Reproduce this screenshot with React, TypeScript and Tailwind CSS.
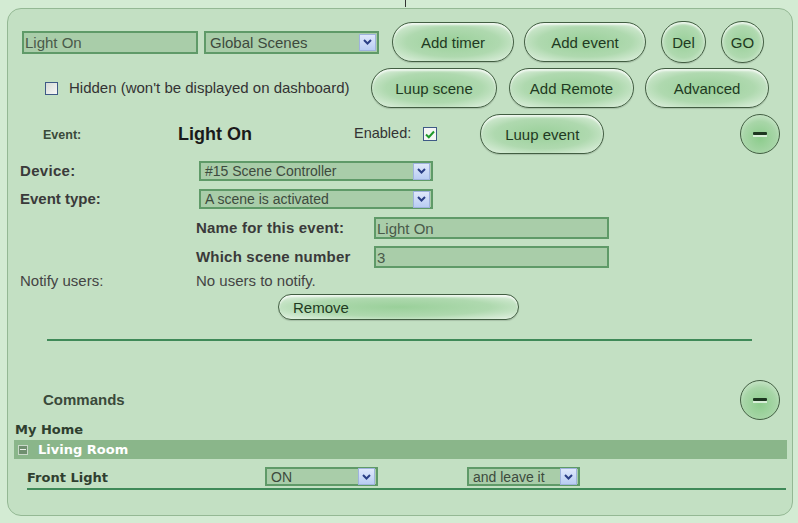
import React from "react";

const font = { fontFamily: '"Liberation Sans", Arial, sans-serif' };

function Arrow() {
  return (
    <div className="w-[17px] h-[17px] flex items-center justify-center bg-gradient-to-b from-[#dfe8fb] to-[#b9cdf3] border border-[#9fb3dd] shrink-0">
      <svg width="9" height="6" viewBox="0 0 9 6">
        <path d="M1 1 L4.5 4.5 L8 1" stroke="#2b3f86" strokeWidth="2" fill="none" />
      </svg>
    </div>
  );
}

function Select({ text, w, h = "h-[20px]", size = "text-[14px]" }: { text: string; w: string; h?: string; size?: string }) {
  return (
    <div className={`${w} ${h} flex items-center justify-between bg-[#a9cda9] border-2 border-[#5f9a68] pl-[4px] pr-[1px] shrink-0`}>
      <span className={`${size} text-[#3d4a3d] leading-none`}>{text}</span>
      <Arrow />
    </div>
  );
}

function Input({ text, w, h = "h-[22px]" }: { text: string; w: string; h?: string }) {
  return (
    <div className={`${w} ${h} flex items-center bg-[#a9cda9] border-2 border-[#5f9a68] pl-[1px] shrink-0`}>
      <span className="text-[15px] text-[#4a5a4a] leading-none">{text}</span>
    </div>
  );
}

function Pill({ text, w, h = "h-[40px]", left = false }: { text: string; w: string; h?: string; left?: boolean }) {
  return (
    <div
      className={`${w} ${h} shrink-0 rounded-full border-[1.5px] border-[#425e42] flex items-center ${left ? "justify-start pl-[14px]" : "justify-center"} bg-[radial-gradient(ellipse_at_center,#9ad09a_0%,#afd9af_55%,#e6f3e6_100%)] shadow-[inset_0_2px_2px_rgba(255,255,255,0.7),0_1px_1px_rgba(0,0,0,0.15)]`}
    >
      <span className="text-[15px] text-[#1f3a22] leading-none">{text}</span>
    </div>
  );
}

function MinusCircle() {
  return (
    <div className="w-[40px] h-[40px] rounded-full border-[1.5px] border-[#425e42] flex items-center justify-center bg-[radial-gradient(circle_at_50%_60%,#8ccc8c_0%,#a8d6a8_55%,#e2f1e2_100%)] shrink-0">
      <div className="flex flex-col items-center">
        <div className="w-[14px] h-[3px] bg-[#1d3620] rounded-[1px]" />
        <div className="w-[14px] h-[2px] bg-[#e8f6e8] opacity-80" />
      </div>
    </div>
  );
}

export default function App() {
  return (
    <div style={font} className="relative w-[798px] h-[523px] bg-[#d3ebd3] overflow-hidden pt-[8px] text-[#333]">
      <div className="absolute left-[405px] top-0 w-[1px] h-[7px] bg-[#333]" />
      <div className="ml-[7px] w-[786px] h-[508px] rounded-[14px] border border-[#94b894] bg-[#c3e0c3] flex flex-col">
        {/* Row 1 */}
        <div className="mt-[13px] h-[40px] flex items-center pl-[14px]">
          <Input text="Light On" w="w-[176px]" h="h-[23px]" />
          <div className="ml-[6px]">
            <Select text="Global Scenes" w="w-[175px]" h="h-[23px]" size="text-[15px]" />
          </div>
          <div className="ml-[13px]"><Pill text="Add timer" w="w-[122px]" /></div>
          <div className="ml-[10px]"><Pill text="Add event" w="w-[122px]" /></div>
          <div className="ml-[15px]"><Pill text="Del" w="w-[45px]" h="h-[42px]" /></div>
          <div className="ml-[15px]"><Pill text="GO" w="w-[43px]" h="h-[42px]" /></div>
        </div>
        {/* Row 2 */}
        <div className="mt-[6px] h-[40px] flex items-center">
          <div className="w-[363px] pl-[37px] flex items-center shrink-0">
            <div className="w-[13px] h-[13px] border border-[#3e5a86] bg-gradient-to-br from-[#d6dcd6] to-[#f7f7f7]" />
            <span className="ml-[11px] text-[15px] text-[#333]">Hidden (won't be displayed on dashboard)</span>
          </div>
          <Pill text="Luup scene" w="w-[126px]" />
          <div className="ml-[12px]"><Pill text="Add Remote" w="w-[125px]" /></div>
          <div className="ml-[11px]"><Pill text="Advanced" w="w-[124px]" /></div>
        </div>
        {/* Row 3 */}
        <div className="mt-[6px] h-[40px] flex items-center pr-[12px]">
          <div className="w-[170px] pl-[35px] shrink-0">
            <span className="text-[12.5px] font-bold text-[#3a4a3a]">Event:</span>
          </div>
          <div className="w-[176px] shrink-0">
            <span className="text-[18px] font-bold text-[#1a1a1a]">Light On</span>
          </div>
          <span className="text-[14.5px] text-[#333]">Enabled:</span>
          <div className="ml-[12px] w-[14px] h-[14px] border border-[#3e5a86] bg-[#f4f6f4] flex items-center justify-center">
            <svg width="10" height="9" viewBox="0 0 10 9">
              <path d="M1 4.5 L3.8 7.2 L9 1.5" stroke="#1f9a2a" strokeWidth="2" fill="none" />
            </svg>
          </div>
          <div className="ml-[43px]"><Pill text="Luup event" w="w-[124px]" /></div>
          <div className="ml-auto"><MinusCircle /></div>
        </div>
        {/* Device */}
        <div className="mt-[7px] h-[20px] flex items-center">
          <div className="w-[191px] pl-[12px] shrink-0">
            <span className="text-[15px] font-bold tracking-[0.3px] text-[#3a3a3a]">Device:</span>
          </div>
          <Select text="#15  Scene Controller" w="w-[234px]" />
        </div>
        {/* Event type */}
        <div className="mt-[8px] h-[20px] flex items-center">
          <div className="w-[191px] pl-[12px] shrink-0">
            <span className="text-[15px] font-bold text-[#3a3a3a]">Event type:</span>
          </div>
          <Select text="A scene is activated" w="w-[234px]" />
        </div>
        {/* Name */}
        <div className="mt-[8px] h-[22px] flex items-center">
          <div className="w-[366px] pl-[188px] shrink-0">
            <span className="text-[15px] font-bold tracking-[0.2px] text-[#3a3a3a]">Name for this event:</span>
          </div>
          <Input text="Light On" w="w-[235px]" />
        </div>
        {/* Scene number */}
        <div className="mt-[7px] h-[22px] flex items-center">
          <div className="w-[366px] pl-[188px] shrink-0">
            <span className="text-[15px] font-bold tracking-[0.2px] text-[#3a3a3a]">Which scene number</span>
          </div>
          <Input text="3" w="w-[235px]" />
        </div>
        {/* Notify */}
        <div className="mt-[5px] h-[16px] flex items-center">
          <div className="w-[188px] pl-[12px] shrink-0">
            <span className="text-[15px] text-[#444]">Notify users:</span>
          </div>
          <span className="text-[15px] text-[#444]">No users to notify.</span>
        </div>
        {/* Remove */}
        <div className="mt-[5px] ml-[270px]">
          <Pill text="Remove" w="w-[241px]" h="h-[26px]" left />
        </div>
        {/* line */}
        <div className="mt-[19px] ml-[39px] w-[705px] h-[2px] bg-[#3f8a58]" />
        {/* Commands */}
        <div className="mt-[39px] h-[40px] flex items-center pl-[35px] pr-[12px]">
          <span className="text-[15px] font-bold text-[#3a4a3a]">Commands</span>
          <div className="ml-auto"><MinusCircle /></div>
        </div>
        <div className="mt-[2px] h-[16px] flex items-center pl-[7px]">
          <span style={{ fontFamily: '"DejaVu Sans", Verdana, sans-serif' }} className="text-[13px] font-bold text-[#2f3f2f]">My Home</span>
        </div>
        <div className="mt-[2px] ml-[6px] w-[773px] h-[19px] bg-[#8ab68a] flex items-center pl-[4px]">
          <div className="w-[10px] h-[10px] bg-[#6f8f6f] border border-[#c9d9c9] flex items-center justify-center">
            <div className="w-[6px] h-[1.5px] bg-[#e8f0e8]" />
          </div>
          <span style={{ fontFamily: '"DejaVu Sans", Verdana, sans-serif' }} className="ml-[10px] text-[13px] font-bold text-white">Living Room</span>
        </div>
        <div className="mt-[8px] h-[19px] flex items-center">
          <div className="w-[257px] pl-[19px] shrink-0">
            <span style={{ fontFamily: '"DejaVu Sans", Verdana, sans-serif' }} className="text-[13px] font-bold text-[#2f3f2f]">Front Light</span>
          </div>
          <Select text="ON" w="w-[113px]" h="h-[19px]" />
          <div className="ml-[89px]">
            <Select text="and leave it" w="w-[113px]" h="h-[19px]" />
          </div>
        </div>
        <div className="mt-[2px] ml-[19px] w-[759px] h-[2px] bg-[#3f8a58]" />
      </div>
    </div>
  );
}
